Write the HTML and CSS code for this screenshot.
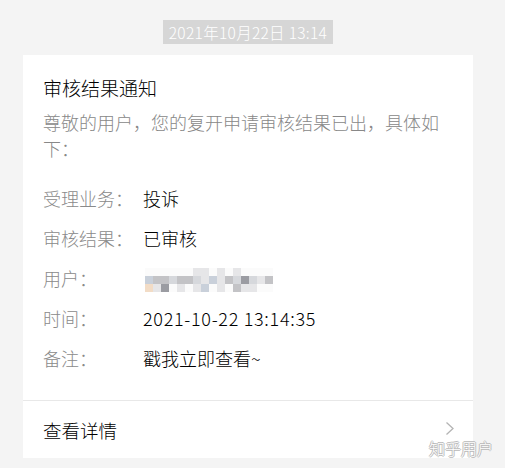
FILE: index.html
```html
<!DOCTYPE html>
<html lang="zh">
<head>
<meta charset="utf-8">
<link rel="stylesheet" href="styles.css">
</head>
<body>
<div class="page">
  <div class="stamp-row"><span class="stamp">2021年10月22日 13:14</span></div>
  <div class="card">
    <div class="body">
      <div class="title">审核结果通知</div>
      <div class="intro">尊敬的用户，您的复开申请审核结果已出，具体如下：</div>
      <div class="rows">
        <div class="row"><span class="label">受理业务：</span><span class="value">投诉</span></div>
        <div class="row"><span class="label">审核结果：</span><span class="value">已审核</span></div>
        <div class="row"><span class="label">用户：</span>
          <span class="mosaic">
            <i></i><i></i><i></i><i></i><i></i><i></i><i class="m1"></i><i class="m1"></i><i></i><i class="m1"></i><i></i><i class="m1"></i><i></i><i></i><i></i><i></i>
            <i class="m2"></i><i class="m3"></i><i class="m3"></i><i class="m4"></i><i class="m3"></i><i class="m3"></i><i class="m4"></i><i class="m1"></i><i class="m2"></i><i class="m1"></i><i class="m3"></i><i class="m4"></i><i class="m5"></i><i class="m4"></i><i class="m1"></i><i class="m3"></i>
            <i class="m6"></i><i class="m1"></i><i class="m5"></i><i></i><i class="m1"></i><i></i><i class="m1"></i><i class="m2"></i><i></i><i class="m1"></i><i></i><i class="m3"></i><i class="m1"></i><i class="m1"></i><i></i><i></i>
          </span>
        </div>
        <div class="row"><span class="label">时间：</span><span class="value num">2021-10-22 13:14:35</span></div>
        <div class="row"><span class="label">备注：</span><span class="value">戳我立即查看~</span></div>
      </div>
    </div>
    <div class="footer">
      <span class="more">查看详情</span>
      <svg class="chev" width="10" height="15" viewBox="0 0 10 15"><path d="M1.5 1.5 L8 7.5 L1.5 13.5" fill="none" stroke="#b4b4b4" stroke-width="1.3"/></svg>
    </div>
  </div>
  <div class="watermark">知乎用户</div>
</div>
</body>
</html>
```
FILE: styles.css
```css
html, body {
  margin: 0;
  padding: 0;
  background: #f4f4f4;
}
body {
  font-family: "Noto Sans CJK SC", "Noto Sans", sans-serif;
  font-weight: 300;
  width: 505px;
  height: 468px;
  overflow: hidden;
}
.page {
  position: relative;
  height: 468px;
  padding: 20px 32px 0 23px;
  box-sizing: border-box;
}
.stamp-row {
  display: flex;
  justify-content: center;
  height: 24px;
}
.stamp {
  background: #d6d6d6;
  color: #fff;
  font-size: 15.5px;
  line-height: 24px;
  padding: 0 6px;
  letter-spacing: 0.3px;
}
.card {
  margin-top: 11px;
  background: #fff;
  width: 450px;
  height: 403px;
  display: flex;
  flex-direction: column;
}
.body {
  padding: 20px 20px 22px 20px;
  border-bottom: 1px solid #e8e8e8;
}
.title {
  font-size: 19px;
  line-height: 26px;
  color: #000;
}
.intro {
  margin-top: 8px;
  font-size: 18px;
  line-height: 26px;
  color: #888;
}
.rows {
  margin-top: 17px;
}
.row {
  display: flex;
  align-items: center;
  height: 40px;
  font-size: 18px;
}
.label {
  width: 100px;
  color: #8a8a8a;
}
.value {
  color: #000;
}
.num {
  letter-spacing: 0.7px;
}
.mosaic {
  display: grid;
  grid-template-columns: repeat(16, 8px);
  grid-auto-rows: 8px;
  margin-left: 2px;
  margin-top: 3px;
}
.mosaic i { background: #fbfbfb; }
.mosaic .m1 { background: #e6e6e8; }
.mosaic .m2 { background: #c9d0da; }
.mosaic .m3 { background: #c3c3c6; }
.mosaic .m4 { background: #d6d8dc; }
.mosaic .m5 { background: #9b9ca2; }
.mosaic .m6 { background: #f2dcc6; }
.footer {
  flex: 1;
  display: flex;
  align-items: center;
  justify-content: space-between;
  padding: 0 18px 0 20px;
}
.more {
  font-size: 18.5px;
  color: #000;
}
.chev {
  margin-top: -2px;
}
.watermark {
  position: absolute;
  left: 429px;
  top: 438px;
  font-size: 16px;
  line-height: 20px;
  color: #fff;
  text-shadow: 1px 0 0 #b8b8b8, -1px 0 0 #b8b8b8, 0 1px 0 #b8b8b8, 0 -1px 0 #b8b8b8;
}
```
